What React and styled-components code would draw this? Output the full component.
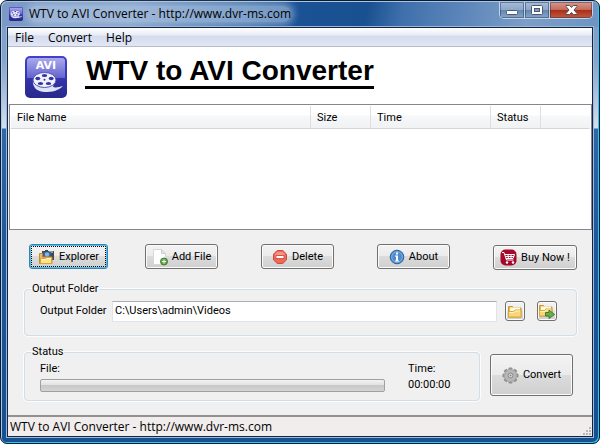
import React from "react";
import styled, { createGlobalStyle, css } from "styled-components";

const GlobalStyle = createGlobalStyle`
  * {
    box-sizing: border-box;
  }

  body {
    margin: 0;
    background: #fff;
    color: #000;
    font-family: Roboto, "Liberation Sans", sans-serif;
    font-size: 11px;
    line-height: 16px;
  }

  button,
  input {
    font: inherit;
    color: inherit;
  }
`;

const Window = styled.div`
  display: flex;
  flex-direction: column;
  min-height: 100vh;
  padding: 0 6px 6px;
  border: 1px solid #0b1a30;
  border-radius: 7px;
  background: linear-gradient(
    #7c9cc6,
    #86a4cc 60px,
    #d3dfee 127px,
    #2f68a8 128px,
    #1d569b 250px,
    #17508f
  );
  box-shadow:
    inset 1px 1px 0 #a9c6e4,
    inset -1px -1px 0 #21cdf5;
`;

const TitleBar = styled.header`
  display: flex;
  align-items: flex-start;
  justify-content: space-between;
  height: 25px;
  margin: 1px -5px 0;
  padding: 0 5px 0 7px;
  border-radius: 6px 6px 0 0;
  background: linear-gradient(
    100deg,
    #7b99c4,
    #7f9ec8 22%,
    #3f70ab 42%,
    #1b5295 50%,
    #19508f 61%,
    #3f70ac 67%,
    #7c9ec8 88%,
    #6d94c2
  );
`;

const Title = styled.div`
  display: flex;
  align-items: center;
  gap: 6px;
  height: 24px;
  font-family: "Open Sans", "Noto Sans", sans-serif;
  font-size: 12px;
  white-space: nowrap;

  span {
    border-radius: 8px;
    background: rgba(190, 210, 234, 0.5);
    box-shadow: 0 0 7px 3px rgba(190, 210, 234, 0.5);
  }
`;

const WindowControls = styled.div`
  display: flex;
  border: 1px solid #c3d5ea;
  border-top: 0;
  border-radius: 0 0 5px 5px;
  overflow: hidden;
`;

const ControlButton = styled.button`
  display: flex;
  align-items: center;
  justify-content: center;
  width: ${({ $close }) => ($close ? 42 : 25)}px;
  height: 16px;
  padding: 0;
  border: 0;
  border-right: ${({ $close }) => ($close ? "0" : "1px solid #c3d5ea")};
  background: ${({ $close }) =>
    $close
      ? "linear-gradient(#d99a8e, #c46a58 48%, #a92d19 50%, #c25a3e)"
      : "linear-gradient(#a7bdd8, #8ca8cb 48%, #6485b0 50%, #86a6cb)"};
  box-shadow: inset 0 0 0 1px rgba(30, 45, 75, 0.45);
`;

const Client = styled.main`
  flex: 1;
  display: flex;
  flex-direction: column;
  border: 1px solid #15253f;
  outline: 1px solid #9ab9dc;
  background: #f0f0f0;
`;

const MenuBar = styled.nav`
  display: flex;
  gap: 14px;
  height: 19px;
  padding: 0 7px;
  border-bottom: 1px solid #b5b9c9;
  background: linear-gradient(#fff, #e8ecf5 7px, #d4dbed 8px, #e2e7f5);
  font-family: "Open Sans", "Noto Sans", sans-serif;
  font-size: 12px;
  line-height: 19px;
`;

const MenuItem = styled.button`
  padding: 0;
  border: 0;
  background: none;
`;

const Banner = styled.div`
  display: flex;
  align-items: flex-start;
  gap: 18px;
  height: 57px;
  padding: 9px 17px 0;
  background: #fff;
`;

const Heading = styled.h1`
  margin: 0;
  padding: 0 0 0 1px;
  border-bottom: 3px solid #000;
  font-family: "Liberation Sans", sans-serif;
  font-size: 28px;
  line-height: 30px;
  white-space: nowrap;
`;

const ListBox = styled.div`
  height: 126px;
  margin: 0 0 0 1px;
  padding: 1px;
  border: 1px solid #828790;
  background: #fff;
`;

const FileTable = styled.table`
  width: 100%;
  border-collapse: separate;
  border-spacing: 0;
  table-layout: fixed;
`;

const HeadCell = styled.th`
  width: ${({ $width }) => ($width ? `${$width}px` : "auto")};
  height: 23px;
  padding: 2px 0 0 6px;
  border-right: 1px solid ${({ $last }) => ($last ? "transparent" : "#dedfe1")};
  border-bottom: 1px solid #d5d5d5;
  background: linear-gradient(#fff 9px, #f7f8fa 10px, #f1f2f4);
  font-weight: normal;
  text-align: left;
`;

const Panel = styled.section`
  flex: 1;
  display: flex;
  flex-direction: column;
  padding: 14px 15px 10px 16px;
`;

const Actions = styled.div`
  display: grid;
  grid-template-columns: repeat(4, 1fr) 84px;
  height: 26px;
  margin: 0 0 3px 5px;
`;

const buttonFace = css`
  display: inline-flex;
  align-items: center;
  justify-content: center;
  border: 1px solid #707070;
  border-radius: 3px;
  background: linear-gradient(#f3f3f3, #ebebeb 49%, #dcdcdc 50%, #cfcfcf);
  box-shadow: inset 0 0 0 1px #fbfbfb;
  white-space: nowrap;
`;

const ActionButton = styled.button`
  ${buttonFace}
  gap: 4px;
  width: ${({ $width }) => $width || 73}px;
  height: 25px;
  padding: 0;
  align-self: ${({ $low }) => ($low ? "end" : "start")};

  ${({ $focused }) =>
    $focused &&
    css`
      border-color: #3c7fb1;
      box-shadow: inset 0 0 0 1px #48c4ee;
      outline: 1px dotted #000;
      outline-offset: -3px;
    `}
`;

const Group = styled.fieldset`
  min-width: 0;
  margin: 0;
  padding: 0 19px 0 15px;
  border: 1px solid #d3dde6;
  border-radius: 4px;
  box-shadow: 0 0 0 1px #fcfcfc;

  legend {
    margin-left: -9px;
    padding: 0 1px;
  }
`;

const FolderRow = styled.div`
  display: flex;
  align-items: center;
  height: 38px;
  padding-bottom: 10px;

  label {
    flex: none;
    width: 72px;
    white-space: nowrap;
  }
`;

const PathInput = styled.input`
  flex: 1;
  min-width: 0;
  height: 21px;
  margin-right: 8px;
  padding: 0 2px 2px;
  border: 1px solid #e2e3ea;
  border-top-color: #abadb3;
  background: #fff;
`;

const IconButton = styled.button`
  ${buttonFace}
  width: 20px;
  height: 20px;
  padding: 0;

  & + & {
    margin-left: 12px;
  }
`;

const BottomRow = styled.div`
  display: flex;
  align-items: flex-start;
  margin-top: 8px;

  ${Group} {
    flex: 1;
  }
`;

const StatusGrid = styled.div`
  display: grid;
  grid-template-columns: 1fr 52px;
  grid-template-rows: 16px 16px;
  align-items: center;
  column-gap: 23px;
  height: 40px;
  padding-top: 1px;
`;

const Progress = styled.progress`
  appearance: none;
  width: 100%;
  height: 13px;
  border: 1px solid #a0a0a0;
  border-radius: 2px;
  background: linear-gradient(#f2f2f2, #e2e2e2 45%, #c8c8c8 50%, #d4d4d4);

  &::-webkit-progress-bar {
    background: none;
  }
`;

const ConvertButton = styled.button`
  ${buttonFace}
  gap: 4px;
  width: 83px;
  height: 42px;
  margin: 10px 4px 0 10px;
  padding: 0;
`;

const StatusBar = styled.footer`
  display: flex;
  align-items: flex-end;
  justify-content: space-between;
  height: 21px;
  padding: 0 1px 0 2px;
  border-top: 2px solid #919191;
  background: #f1edec;
  font-family: "Open Sans", "Noto Sans", sans-serif;
  font-size: 12px;
  line-height: 19px;
`;

const AviIcon = ({ size }) => (
  <svg width={size} height={size} viewBox="0 0 42 42" aria-hidden="true">
    <defs>
      <linearGradient id="aviFace" x1="0" y1="0" x2="0" y2="1">
        <stop offset="0" stopColor="#4341cd" />
        <stop offset="1" stopColor="#28288c" />
      </linearGradient>
      <linearGradient id="aviGloss" x1="0" y1="0" x2="0" y2="1">
        <stop offset="0" stopColor="#a9a9ec" />
        <stop offset="1" stopColor="#6463ce" />
      </linearGradient>
    </defs>
    <rect width="42" height="42" rx="5" fill="url(#aviFace)" />
    <path d="M2 5q0-3 3-3h32q3 0 3 3v17H2z" fill="url(#aviGloss)" />
    {size > 20 && (
      <text
        x="21"
        y="13"
        textAnchor="middle"
        fontFamily="DejaVu Sans"
        fontWeight="bold"
        fontSize="11"
        fill="#fff"
      >
        AVI
      </text>
    )}
    <g transform={size > 20 ? undefined : "translate(-5 -10) scale(1.22)"}>
      <path
        d="M8 24C7 31 12 36 20 36C27 36 33 35 38 30C34 31 31 32 28 31L30 24z"
        fill="#dfe4f6"
      />
      <ellipse
        cx="19.5"
        cy="24"
        rx="11.5"
        ry="7.5"
        fill="#f1f3fc"
        stroke="#5553b8"
      />
      <g fill="#3736a0">
        <ellipse cx="19.500" cy="19.500" rx="2.700" ry="1.500" />
        <ellipse cx="12.800" cy="22.500" rx="2.500" ry="1.700" />
        <ellipse cx="26.200" cy="22.500" rx="2.500" ry="1.700" />
        <ellipse cx="15.500" cy="27.500" rx="2.700" ry="1.600" />
        <ellipse cx="23.500" cy="27.500" rx="2.700" ry="1.600" />
        <circle cx="19.500" cy="23.800" r="1" />
      </g>
    </g>
  </svg>
);

const FolderShape = () => (
  <>
    <path d="M.5 2.5h4l1 1.500h7.500v9H.5z" fill="#e9b84d" stroke="#cf9633" />
    <path d="M2 3.500h10v6H2z" fill="#fffbe6" />
    <path d="M.5 7.500h5l1.500-1.500h6v7H.5z" fill="#f8d774" stroke="#dca63b" />
    <path d="M1.500 8.500h4.500l1.500-1.500H12" fill="none" stroke="#fff5c9" />
  </>
);

const ExplorerIcon = () => (
  <svg width="17" height="16" viewBox="0 0 17 16" aria-hidden="true">
    <path d="M4 2h3V1h3v1h6v9H4z" fill="#484848" />
    <path d="M11 2h4v2h-4z" fill="#999" />
    <rect x="5" y="3" width="8" height="6" fill="#315e9d" />
    <circle cx="9" cy="5.500" r="2.300" fill="#7fb5eb" />
    <path d="M1.500 4.500h3V8H14v6.500H1.500z" fill="#f0b956" stroke="#c78932" />
    <path d="M2.500 14.500v-5h5l1.500-1h4.500v6z" fill="#ffe387" stroke="#dba23f" />
    <path d="M3.500 10.500h4.500l1-1h4" fill="none" stroke="#fff8d5" />
  </svg>
);

const AddFileIcon = () => (
  <svg width="16" height="18" viewBox="0 0 16 18" aria-hidden="true">
    <path d="M1.500 1.500h8l4 4v11h-12z" fill="#fdfdfd" stroke="#d7d7d7" />
    <path d="M9.500 1.500v4h4z" fill="#e6e6e6" stroke="#cfcfcf" />
    <circle cx="12" cy="13.500" r="3.500" fill="#69a44d" stroke="#44793a" />
    <path d="M12 11.500v4M10 13.500h4" stroke="#f0ffe9" />
  </svg>
);

const DeleteIcon = () => (
  <svg width="16" height="16" viewBox="0 0 16 16" aria-hidden="true">
    <path
      d="M5.200 1.500h5.600l3.700 3.700v5.600l-3.700 3.700H5.200L1.500 10.800V5.200z"
      fill="#eb6959"
      stroke="#d34a3c"
    />
    <path d="M5.500 3h5L13 5.500 12 8H3L3 5.500z" fill="#f3968a" />
    <rect x="4" y="6.500" width="8" height="3" fill="#fff" stroke="#df5142" />
  </svg>
);

const AboutIcon = () => (
  <svg width="16" height="16" viewBox="0 0 16 16" aria-hidden="true">
    <circle cx="8" cy="8" r="6.800" fill="#4f8acb" stroke="#2b5f9f" />
    <circle cx="8" cy="8" r="5.300" fill="none" stroke="#82afe0" />
    <path d="M7 3.500h2v2H7zM6 6.500h3v5h1v1H6v-1h1v-4H6z" fill="#fff" />
  </svg>
);

const CartIcon = () => (
  <svg width="17" height="17" viewBox="0 0 17 17" aria-hidden="true">
    <rect x=".5" y=".5" width="16" height="16" rx="5" fill="#a5082b" />
    <path
      d="M2 3.500h2l2.500 7.500h7M5 5.500h9.500l-1.500 4H6M5.500 7.500h8.500M8 5.500l.5 4M11 5.500v4"
      fill="none"
      stroke="#fff"
    />
    <circle cx="7" cy="13.500" r="1.200" fill="#fff" />
    <circle cx="13" cy="13.500" r="1.200" fill="#fff" />
  </svg>
);

const BrowseIcon = () => (
  <svg width="14" height="14" viewBox="0 0 14 14" aria-hidden="true">
    <FolderShape />
  </svg>
);

const OpenIcon = () => (
  <svg width="16" height="16" viewBox="0 0 16 16" aria-hidden="true">
    <FolderShape />
    <path
      d="M6.500 9.500H10V7l5.500 4.500L10 15.500v-2.500H6.500z"
      fill="#69ad4d"
      stroke="#3d7d35"
    />
  </svg>
);

const GearIcon = () => (
  <svg width="17" height="17" viewBox="0 0 17 17" aria-hidden="true">
    <g fill="#929292">
      {[0, 45, 90, 135].map((angle) => (
        <rect
          key={angle}
          x="6.500"
          y=".5"
          width="4"
          height="16"
          rx="1"
          transform={`rotate(${angle} 8.500 8.500)`}
        />
      ))}
    </g>
    <circle cx="8.500" cy="8.500" r="6" fill="#b8b8b8" stroke="#a6a6a6" />
    <circle cx="8.500" cy="8.500" r="2.500" fill="#ddd" stroke="#858585" />
    <circle cx="8.500" cy="8.500" r="1" fill="#848484" />
  </svg>
);

const MinimizeIcon = () => (
  <svg width="12" height="12" viewBox="0 0 12 12" aria-hidden="true">
    <rect x=".5" y="6.500" width="11" height="4" rx="1" fill="#fff" stroke="#4b5a71" />
  </svg>
);

const MaximizeIcon = () => (
  <svg width="12" height="12" viewBox="0 0 12 12" aria-hidden="true">
    <rect x=".5" y="1.500" width="11" height="9" rx="1" fill="#fff" stroke="#4b5a71" />
    <rect x="3.500" y="4.500" width="5" height="3" fill="#839bbd" stroke="#4b5a71" />
  </svg>
);

const CloseIcon = () => (
  <svg width="13" height="12" viewBox="0 0 13 12" aria-hidden="true">
    <path
      d="M1 1.500h3.500l2 2 2-2H12v1L9 6l3 3.500v1H8.500l-2-2-2 2H1v-1L4 6 1 2.500z"
      fill="#fff"
      stroke="#594c55"
    />
  </svg>
);

const Grip = () => (
  <svg width="9" height="9" viewBox="0 0 9 9" fill="#bab7b6" aria-hidden="true">
    <path d="M7 0h2v2H7zM4 3h2v2H4zM7 3h2v2H7zM1 6h2v2H1zM4 6h2v2H4zM7 6h2v2H7z" />
  </svg>
);

const columns = [
  { title: "File Name" },
  { title: "Size", width: 60 },
  { title: "Time", width: 120 },
  { title: "Status", width: 50 },
  { title: "", width: 49 },
];

const actions = [
  { title: "Explorer", Icon: ExplorerIcon, width: 79, focused: true },
  { title: "Add File", Icon: AddFileIcon },
  { title: "Delete", Icon: DeleteIcon },
  { title: "About", Icon: AboutIcon },
  { title: "Buy Now !", Icon: CartIcon, width: 84, low: true },
];

const App = () => {
  const appTitle = "WTV to AVI Converter - http://www.dvr-ms.com";

  return (
    <>
      <GlobalStyle />
      <Window>
        <TitleBar>
          <Title>
            <AviIcon size={14} />
            <span>{appTitle}</span>
          </Title>
          <WindowControls>
            <ControlButton aria-label="Minimize">
              <MinimizeIcon />
            </ControlButton>
            <ControlButton aria-label="Maximize">
              <MaximizeIcon />
            </ControlButton>
            <ControlButton $close aria-label="Close">
              <CloseIcon />
            </ControlButton>
          </WindowControls>
        </TitleBar>

        <Client>
          <MenuBar>
            {["File", "Convert", "Help"].map((title) => (
              <MenuItem key={title}>{title}</MenuItem>
            ))}
          </MenuBar>

          <Banner>
            <AviIcon size={42} />
            <Heading>WTV to AVI Converter</Heading>
          </Banner>

          <ListBox>
            <FileTable>
              <thead>
                <tr>
                  {columns.map(({ title, width }) => (
                    <HeadCell key={title} $width={width} $last={!title}>
                      {title}
                    </HeadCell>
                  ))}
                </tr>
              </thead>
            </FileTable>
          </ListBox>

          <Panel>
            <Actions>
              {actions.map(({ title, Icon, width, focused, low }) => (
                <ActionButton
                  key={title}
                  $width={width}
                  $focused={focused}
                  $low={low}
                >
                  <Icon />
                  {title}
                </ActionButton>
              ))}
            </Actions>

            <BottomRow>
              <Group>
                <legend>Output Folder</legend>
                <FolderRow>
                  <label htmlFor="output">Output Folder</label>
                  <PathInput id="output" defaultValue="C:\Users\admin\Videos" />
                  <IconButton aria-label="Browse">
                    <BrowseIcon />
                  </IconButton>
                  <IconButton aria-label="Open folder">
                    <OpenIcon />
                  </IconButton>
                </FolderRow>
              </Group>
            </BottomRow>

            <BottomRow>
              <Group>
                <legend>Status</legend>
                <StatusGrid>
                  <label htmlFor="progress">File:</label>
                  <span>Time:</span>
                  <Progress id="progress" value="0" max="100" />
                  <span>00:00:00</span>
                </StatusGrid>
              </Group>
              <ConvertButton>
                <GearIcon />
                Convert
              </ConvertButton>
            </BottomRow>
          </Panel>

          <StatusBar>
            <span>{appTitle}</span>
            <Grip />
          </StatusBar>
        </Client>
      </Window>
    </>
  );
};

export default App;
